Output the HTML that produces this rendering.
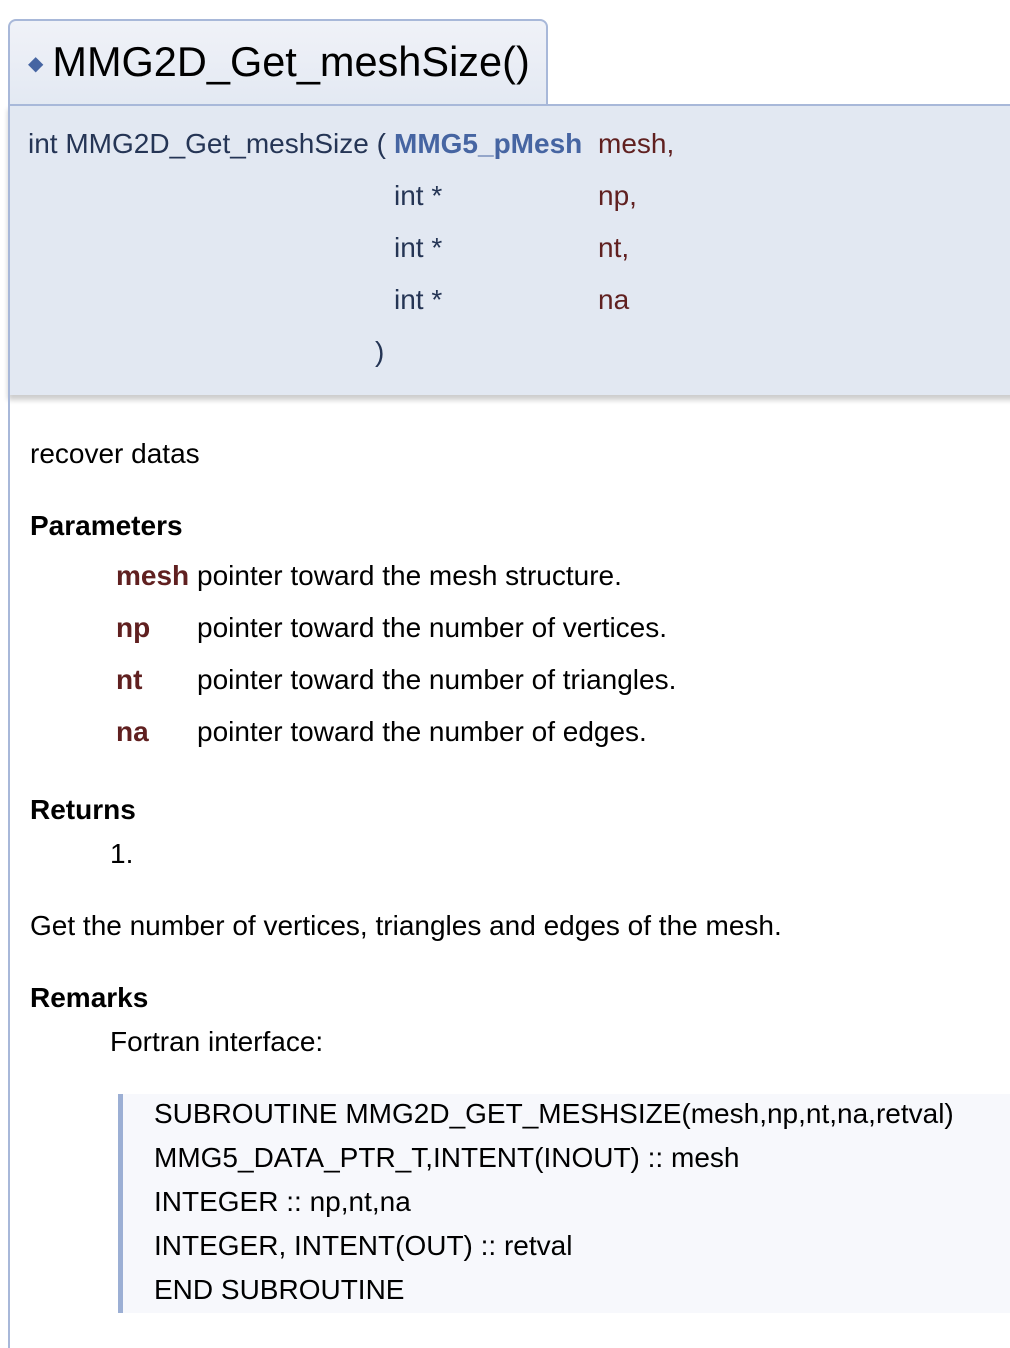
<!DOCTYPE html>
<html><head><meta charset="utf-8"><style>
body{margin:0;width:1010px;height:1348px;background:#fff;font-family:"Liberation Sans",Arial,sans-serif;position:relative;overflow:hidden}
.a{position:absolute;white-space:nowrap;line-height:52px;font-size:28px;margin-top:1px}
.lb{position:absolute;left:8px;top:100px;width:2px;height:1248px;background:#A8B8D9}
.tab{position:absolute;left:8px;top:19px;width:536px;height:90px;border:2px solid #A8B8D9;border-bottom:none;border-radius:8px 8px 0 0;background:linear-gradient(#F0F2F8,#E2E8F2)}
.proto{position:absolute;left:8px;top:104px;width:1010px;height:289px;border-top:2px solid #A8B8D9;border-left:2px solid #A8B8D9;background:#E2E8F2;box-shadow:0 5px 5px rgba(0,0,0,0.2)}
.pt{color:#253555}
.pn{color:#602020}
.b{font-weight:bold}
.code{position:absolute;left:118px;top:1094px;width:900px;height:219px;border-left:5px solid #9CAFD4;background:#F7F8FC}
</style></head><body>
<div class="tab"></div>
<div class="proto"></div>
<div class="lb"></div>
<div class="a" style="left:28px;top:35px;font-size:41.5px;line-height:52px;color:#000"><span style="color:#4665A2;font-size:20px;vertical-align:6px">◆</span><span style="margin-left:9px">MMG2D_Get_meshSize()</span></div>
<div class="a pt" style="left:28px;top:117px">int MMG2D_Get_meshSize (</div>
<div class="a b" style="left:394px;top:117px;color:#4665A2">MMG5_pMesh</div>
<div class="a pn" style="left:598px;top:117px">mesh,</div>
<div class="a pt" style="left:394px;top:169px">int *</div><div class="a pn" style="left:598px;top:169px">np,</div>
<div class="a pt" style="left:394px;top:221px">int *</div><div class="a pn" style="left:598px;top:221px">nt,</div>
<div class="a pt" style="left:394px;top:273px">int *</div><div class="a pn" style="left:598px;top:273px">na</div>
<div class="a pt" style="left:375px;top:325px">)</div>
<div class="a" style="left:30px;top:427px">recover datas</div>
<div class="a b" style="left:30px;top:499px">Parameters</div>
<div class="a b pn" style="left:116px;top:549px">mesh</div><div class="a" style="left:197px;top:549px">pointer toward the mesh structure.</div>
<div class="a b pn" style="left:116px;top:601px">np</div><div class="a" style="left:197px;top:601px">pointer toward the number of vertices.</div>
<div class="a b pn" style="left:116px;top:653px">nt</div><div class="a" style="left:197px;top:653px">pointer toward the number of triangles.</div>
<div class="a b pn" style="left:116px;top:705px">na</div><div class="a" style="left:197px;top:705px">pointer toward the number of edges.</div>
<div class="a b" style="left:30px;top:783px">Returns</div>
<div class="a" style="left:110px;top:827px">1.</div>
<div class="a" style="left:30px;top:899px">Get the number of vertices, triangles and edges of the mesh.</div>
<div class="a b" style="left:30px;top:971px">Remarks</div>
<div class="a" style="left:110px;top:1015px">Fortran interface:</div>
<div class="code"></div>
<div class="a" style="left:154px;top:1087px">SUBROUTINE MMG2D_GET_MESHSIZE(mesh,np,nt,na,retval)</div>
<div class="a" style="left:154px;top:1131px">MMG5_DATA_PTR_T,INTENT(INOUT) :: mesh</div>
<div class="a" style="left:154px;top:1175px">INTEGER :: np,nt,na</div>
<div class="a" style="left:154px;top:1219px">INTEGER, INTENT(OUT) :: retval</div>
<div class="a" style="left:154px;top:1263px">END SUBROUTINE</div>
</body></html>
